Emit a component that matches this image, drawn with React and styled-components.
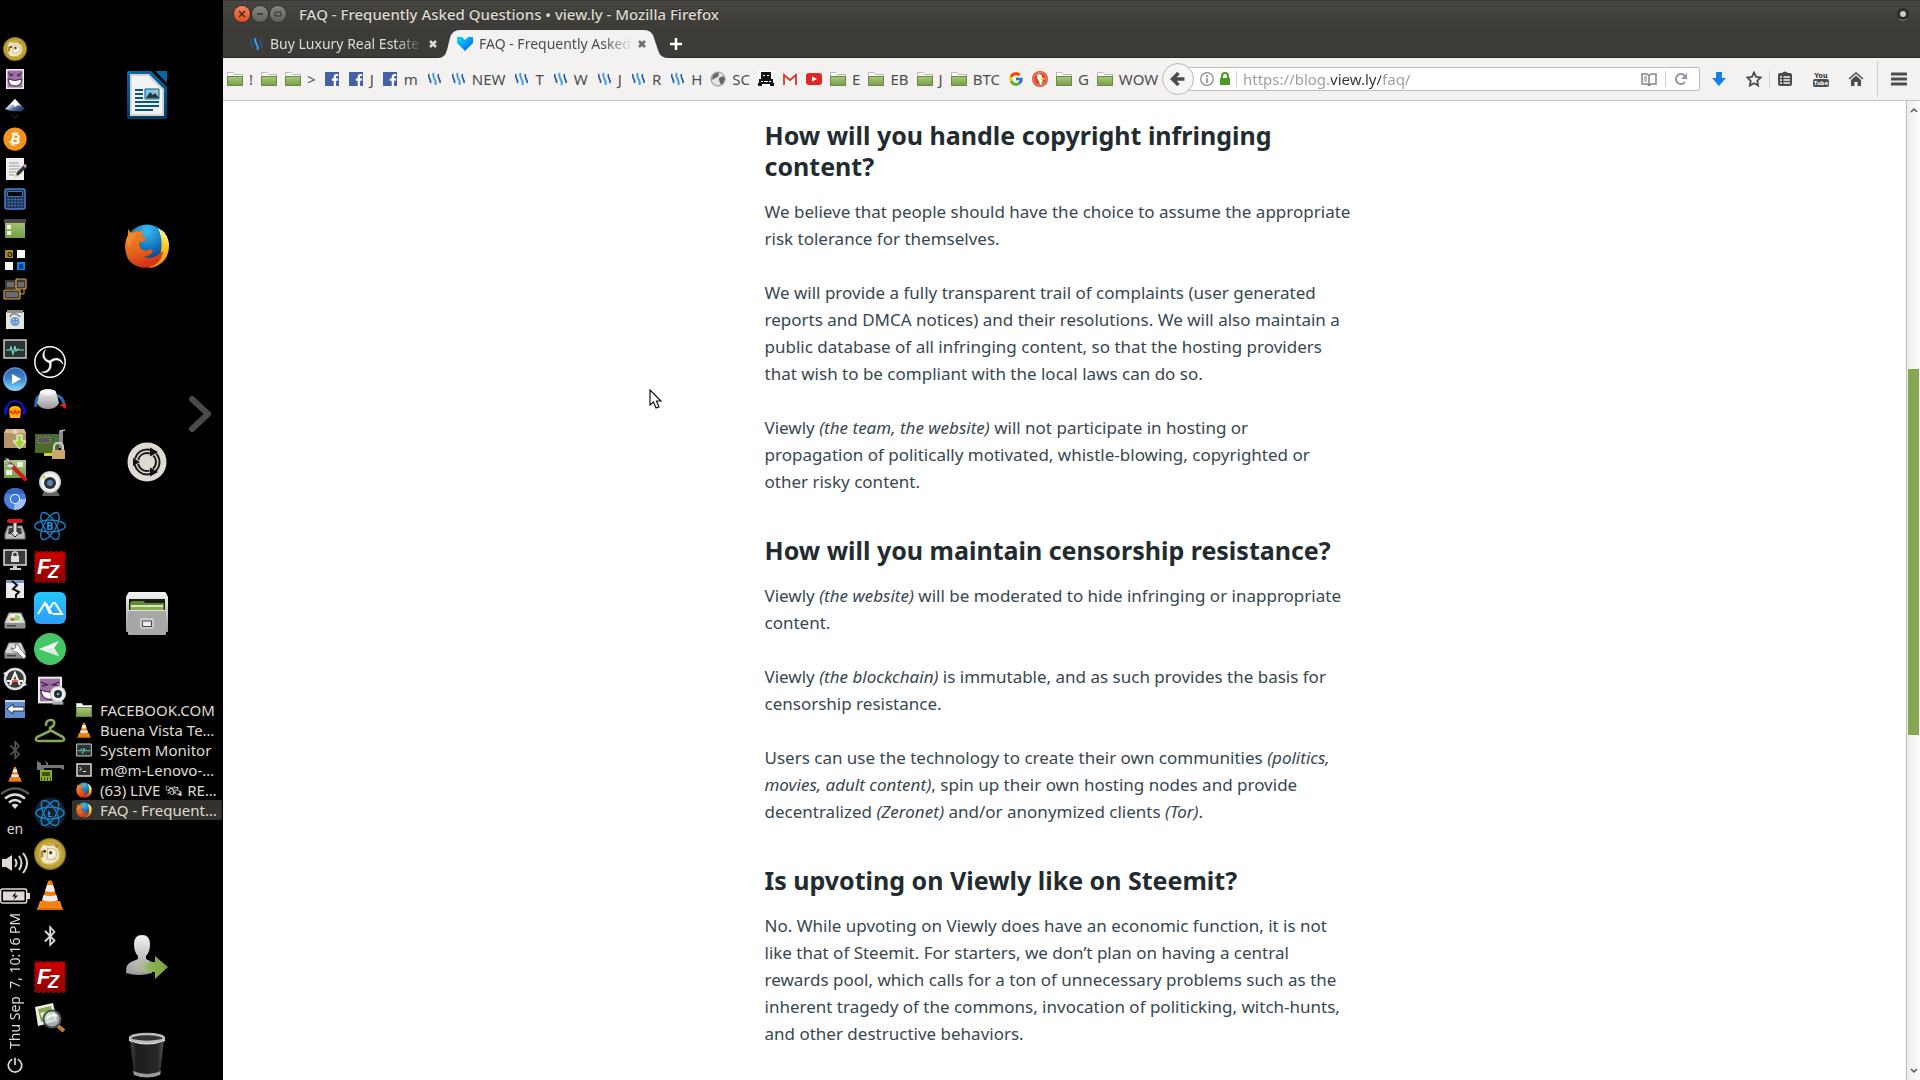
import React from 'react';
import styled, { createGlobalStyle, css } from 'styled-components';
import { FaBitcoin, FaBluetoothB, FaFacebookF } from 'react-icons/fa';
import { FcGoogle } from 'react-icons/fc';

const GlobalStyle = createGlobalStyle`
  * { box-sizing: border-box; }
  body {
    margin: 0;
    overflow: hidden;
    background: #000;
    font-family: 'Noto Sans', 'Open Sans', sans-serif;
  }
  button {
    padding: 0;
    border: none;
    background: none;
    color: inherit;
    font: inherit;
  }
  svg { display: block; flex: none; }
`;

const Desktop = styled.div`
  display: flex;
  height: 100vh;
  overflow: hidden;
`;

/* ---------- left panels ---------- */

const IndicatorColumn = styled.nav`
  display: flex;
  flex-direction: column;
  align-items: center;
  flex: none;
  width: 30px;
  padding-top: 34px;
  color: #dfdbd2;
  font-size: 14px;
`;

const LauncherColumn = styled.nav`
  display: flex;
  flex-direction: column;
  align-items: center;
  gap: 9px;
  flex: none;
  width: 40px;
  padding-top: 346px;
  color: #dfdbd2;
`;

const DesktopColumn = styled.nav`
  display: flex;
  flex-direction: column;
  align-items: center;
  flex: none;
  width: 153px;
  padding-top: 71px;
`;

const IndicatorButton = styled.button`
  display: flex;
  align-items: center;
  justify-content: center;
  flex: none;
  width: 30px;
  height: 30px;
`;

const TrayButton = styled(IndicatorButton)`
  height: 24px;
  margin-top: ${(props) => props.$gap || 0}px;
`;

const Clock = styled.button`
  writing-mode: vertical-rl;
  transform: rotate(180deg);
  height: 138px;
  margin-top: 4px;
  white-space: pre;
  line-height: 20px;
`;

const LauncherButton = styled.button`
  display: flex;
  align-items: center;
  justify-content: center;
  flex: none;
  width: 32px;
  height: 32px;
`;

const DesktopButton = styled.button`
  flex: none;
  margin-top: ${(props) => props.$gap || 0}px;
`;

const Chevron = styled(DesktopButton)`
  align-self: flex-end;
  margin-right: 11px;
`;

const TaskList = styled.div`
  align-self: stretch;
  margin: 65px 1px 0 2px;
`;

const Task = styled.button`
  display: flex;
  align-items: center;
  gap: 8px;
  width: 100%;
  height: 20px;
  padding-left: 4px;
  border-radius: 2px;
  color: #dfdbd2;
  font-size: 15px;
  line-height: 20px;
  white-space: nowrap;
  background: ${(props) => props.$active ? '#33322f' : 'none'};
`;

/* ---------- browser window ---------- */

const Browser = styled.section`
  display: flex;
  flex-direction: column;
  flex: 1;
  min-width: 0;
  background: #fff;
`;

const Chrome = styled.header`
  background: linear-gradient(#474642, #3c3b37 28px);
  border-top: 1px solid #3a3935;
  border-bottom: 1px solid #2a2926;
`;

const TitleBar = styled.div`
  display: flex;
  align-items: center;
  height: 27px;
  padding: 0 10px 2px 11px;
  gap: 2px;
  color: #dfdbd2;
`;

const WindowTitle = styled.h1`
  flex: 1;
  margin: 0 0 0 11px;
  font-size: 15px;
  line-height: 20px;
  font-weight: 500;
  text-shadow: 0 -1px #222;
`;

const WindowButton = styled.button`
  display: flex;
  align-items: center;
  justify-content: center;
  width: 16px;
  height: 16px;
  border-radius: 50%;
  box-shadow: 0 0 0 1px #33322e;
  color: #3c3b37;
  background: ${(props) => props.$close
    ? 'linear-gradient(#f48562, #df4d1f)'
    : 'linear-gradient(#85847d, #62615b)'};
`;

const TabStrip = styled.div`
  display: flex;
  height: 29px;
  padding: 3px 0 0 15px;
`;

const Tab = styled.div`
  position: relative;
  display: flex;
  align-items: center;
  width: 209px;
  padding: 0 5px 0 10px;
  color: ${(props) => props.$active ? '#4c4c4c' : '#dfdbd2'};
`;

const TabShape = styled.svg`
  position: absolute;
  left: -9px;
  bottom: -1px;
`;

const TabLabel = styled.button`
  position: relative;
  display: flex;
  align-items: center;
  gap: 6px;
  flex: 1;
  min-width: 0;
  overflow: hidden;
  font-size: 14px;
  line-height: 20px;
  white-space: nowrap;
  mask-image: linear-gradient(to right, #000 84%, transparent);
`;

const TabClose = styled.button`
  position: relative;
  padding: 4px;
`;

const NewTab = styled.button`
  margin-left: 13px;
`;

const ToolBar = styled.div`
  display: flex;
  align-items: center;
  height: 43px;
  flex: none;
  background: #f4f2f1;
  border-bottom: 1px solid #c6c3c0;
`;

const Bookmarks = styled.nav`
  display: flex;
  align-items: center;
  flex: none;
  width: 939px;
  overflow: hidden;
`;

const Bookmark = styled.a`
  display: flex;
  align-items: center;
  gap: 6px;
  flex: none;
  height: 24px;
  padding: 0 4px;
  color: #4c4c4c;
  font-size: 15px;
  text-decoration: none;
`;

const BackButton = styled.button`
  display: flex;
  align-items: center;
  justify-content: center;
  flex: none;
  width: 32px;
  height: 32px;
  border: 1px solid #bbb9b6;
  border-radius: 50%;
  background: #f7f6f5;
  z-index: 1;
`;

const AddressBar = styled.div`
  display: flex;
  align-items: center;
  flex: 1;
  height: 24px;
  margin-left: -6px;
  padding: 0 11px;
  border: 1px solid #bfbcb9;
  border-radius: 2px;
  background: #fff;
`;

/* the host part of the address is darker than the rest */
const AddressInput = styled.input`
  flex: 1;
  min-width: 0;
  height: 22px;
  padding: 0;
  border: none;
  outline: none;
  font: 15px/22px 'Noto Sans', sans-serif;
  background: linear-gradient(to right, #9b9b9b 88px, #333 88px, #333 138px, #9b9b9b 138px);
  background-clip: text;
  -webkit-text-fill-color: transparent;
`;

const LockMark = styled.span`
  margin-left: 6px;
`;

const Divider = styled.span`
  flex: none;
  width: 1px;
  height: ${(props) => props.$tall ? 36 : 16}px;
  margin: 0 ${(props) => props.$space || 6}px;
  background: #d0cecb;
`;

const Tools = styled.div`
  display: flex;
  align-items: center;
  flex: none;
  padding: 0 13px 0 12px;
`;

const ToolButton = styled.button`
  margin-right: ${(props) => props.$gap || 0}px;
`;

const Viewport = styled.div`
  display: flex;
  flex: 1;
  min-height: 0;
`;

const Article = styled.main`
  flex: 1;
  overflow: hidden;
  padding-top: 19px;
`;

const Column = styled.div`
  width: 600px;
  margin: 0 auto;
  white-space: nowrap;
`;

const Heading = styled.h2`
  margin: 0 0 16px;
  color: #222c30;
  font-size: 25px;
  line-height: 31px;
  font-weight: 700;
`;

const Paragraph = styled.p`
  margin: 0 0 27px;
  color: #37474f;
  font-size: 17px;
  line-height: 27px;
  ${(props) => props.$last && css`margin-bottom: 40px;`}
`;

const Scrollbar = styled.div`
  display: flex;
  flex-direction: column;
  width: 14px;
  border-left: 1px solid #bfbcb9;
  background: linear-gradient(to right, #efedeb, #fcfcfb);
`;

const ScrollButton = styled.button`
  display: flex;
  align-items: center;
  justify-content: center;
  height: 18px;
`;

const Track = styled.div`
  display: grid;
  flex: 1;
  grid-template-rows: 250fr 366fr 327fr;
`;

const Thumb = styled.div`
  grid-row: 2;
  margin: 0 1px;
  background: #86a651;
`;

const Pointer = styled.svg`
  position: absolute;
  left: 649px;
  top: 389px;
`;

const SharedDefs = styled.svg`
  position: absolute;
`;

/* ---------- drawings ---------- */

const Defs = () => (
  <SharedDefs width='0' height='0' aria-hidden='true'>
    <defs>
      <linearGradient id='silver' x2='0' y2='1'><stop stopColor='#f4f4f4' /><stop offset='1' stopColor='#999' /></linearGradient>
      <linearGradient id='green' x2='0' y2='1'><stop stopColor='#a9c87c' /><stop offset='1' stopColor='#779e43' /></linearGradient>
      <linearGradient id='red' x2='0' y2='1'><stop stopColor='#d00000' /><stop offset='1' stopColor='#8c0000' /></linearGradient>
      <linearGradient id='blue' x2='0' y2='1'><stop stopColor='#2c5ba8' /><stop offset='.5' stopColor='#3f86d0' /><stop offset='1' stopColor='#8be0ff' /></linearGradient>
      <linearGradient id='writer' x2='0' y2='1'><stop stopColor='#0369a3' /><stop offset='1' stopColor='#023f62' /></linearGradient>
      <linearGradient id='sky' x2='0' y2='1'><stop stopColor='#23c8ff' /><stop offset='1' stopColor='#2e9dfa' /></linearGradient>
      <linearGradient id='peak' x2='1' y2='1'><stop offset='.3' stopColor='#fff' /><stop offset='.6' stopColor='#4a6ea4' /><stop offset='1' stopColor='#0b1d3c' /></linearGradient>
      <linearGradient id='heart' x2='1' y2='1'><stop stopColor='#00e0f8' /><stop offset='1' stopColor='#0058e8' /></linearGradient>
      <linearGradient id='fade' x2='1' y2='0'><stop stopColor='#d0dcc0' stopOpacity='0' /><stop offset='.5' stopColor='#8db35a' /><stop offset='1' stopColor='#7ba03c' /></linearGradient>
      <linearGradient id='bin' x2='1' y2='0'><stop stopColor='#444' /><stop offset='.2' stopColor='#1d1d1e' /><stop offset='.8' stopColor='#262627' /><stop offset='1' stopColor='#555' /></linearGradient>
      <linearGradient id='fox' x2='0.3' y2='1'><stop stopColor='#f08a28' /><stop offset='.6' stopColor='#e8661b' /><stop offset='1' stopColor='#d4321a' /></linearGradient>
      <linearGradient id='flame' x2='0' y2='1'><stop stopColor='#fff3a0' /><stop offset='.4' stopColor='#ffd31c' /><stop offset='1' stopColor='#ee7a1c' /></linearGradient>
      <radialGradient id='globe' cx='.5' cy='.15' r='.9'><stop stopColor='#38bdf0' /><stop offset='.45' stopColor='#1374bd' /><stop offset='1' stopColor='#11194c' /></radialGradient>
      <radialGradient id='ball'><stop stopColor='#fff' /><stop offset='.8' stopColor='#eee' /><stop offset='1' stopColor='#bbb' /></radialGradient>
    </defs>
  </SharedDefs>
);

const Icon = ({ size = 24, height, box = 24, children }) => (
  <svg width={size} height={height || size} viewBox={typeof box === 'string' ? box : `0 0 ${box} ${box}`} aria-hidden='true'>
    {children}
  </svg>
);

const Doge = ({ size }) => (
  <Icon size={size}>
    <circle cx='12' cy='12' r='12' fill='#8d7823' />
    <circle cx='12' cy='12' r='11' fill='#bba136' />
    <circle cx='12' cy='12' r='8.5' fill='#c9b34c' />
    <path d='M5 8l2-3 3 1h4l3-2 1 5q2 5-1 8-3 3-9 2-4-2-3-11z' fill='#f0e7cb' />
    <path d='M16 4l2 1v3l-3-2zM5 10l2-1v5l-2 1z' fill='#b48a3a' />
    <path d='M10 8h3q4 0 4 4t-4 4h-3z' fill='#f7f0dd' stroke='#cfc08f' />
    <circle cx='8' cy='10' r='1' fill='#33270d' /><circle cx='12.500' cy='11' r='1.200' fill='#4b3b18' />
  </Icon>
);

const Grin = ({ size, cam }) => (
  <Icon size={size}>
    <path d='M3 2h18v20H3z' fill='#eee' />
    <path d='M4.500 3.500h15v17h-15z' fill='#9d6fa3' />
    <path d='M5 6l5 2-4 1m13-3l-5 2 4 1' stroke='#43214c' fill='none' />
    <path d='M5 12q7 3 14 0-1 7-7 7t-7-7z' fill='#fff' stroke='#482750' />
    {cam && <g><circle cx='18' cy='15' r='6' fill='url(#ball)' /><path d='M14 21h8v2h-8z' fill='#aaa' /><circle cx='18' cy='15' r='3' fill='#222d38' /><circle cx='18' cy='15' r='1' fill='#8aa6bd' /></g>}
  </Icon>
);

const Inkscape = () => (
  <Icon>
    <path d='M12 2l10 10q-4 4-8 2-6 1-12-2z' fill='url(#peak)' />
    <path d='M12 2l-5 6 3-1 2 3 3-2 3 1z' fill='#fff' />
    <path d='M9 18l3 3 4-3' fill='none' stroke='#333' />
  </Icon>
);

const Notes = () => (
  <Icon>
    <path d='M3 1h18v22H3z' fill='#efefed' />
    <path d='M6 6h10M6 9h11M6 12h10M6 15h7M6 18h5' stroke='#999' />
    <path d='M12 20l2-5 7-7 2 3-7 7z' fill='#3a3a3a' />
    <path d='M20 8l2-1 2 2-2 2z' fill='#d59cc8' /><path d='M11 21l2-4 2 2z' fill='#e0d46c' />
  </Icon>
);

const Calculator = () => (
  <Icon>
    <rect x='2' y='2' width='20' height='20' rx='2' fill='#1d3558' stroke='#4b7fc7' strokeWidth='1.500' />
    <path d='M4.500 4.500h15v5h-15z' fill='#05070c' stroke='#3e71b6' />
    <path d='M4.500 12.500h15M4.500 15.500h15M4.500 18.500h15' stroke='#4977b5' strokeWidth='1.500' strokeDasharray='2 1.300' />
  </Icon>
);

const GreenWindow = () => (
  <Icon><path d='M2 3h20v18H2z' fill='url(#green)' /><path d='M1 2h22v4H1z' fill='#4b4a46' /><path d='M4 8h4v4H4zM4 14h4v4H4z' fill='#f2f2ea' /></Icon>
);

const Quad = () => (
  <Icon>
    <path d='M2 3h8v8H2z' fill='#b08a0a' /><path d='M14 3h8v8h-8zM2 15h8v8H2z' fill='#fff' />
    <path d='M14 15h8v8h-8z' fill='#0c83f2' />
    <text x='4' y='10' fontSize='7' fontWeight='700' fill='#1b1400'>O</text>
    <text x='16' y='22' fontSize='7' fontWeight='700' fill='#04264c'>B</text>
  </Icon>
);

const Screens = () => (
  <Icon>
    <rect x='2' y='3' width='11' height='9' fill='#3a3a3a' /><rect x='13' y='2' width='10' height='10' rx='1' fill='#3a3a3a' stroke='#e0a63a' strokeWidth='1.200' />
    <rect x='1' y='13' width='16' height='9' rx='1' fill='#3a3a3a' stroke='#e0a63a' strokeWidth='1.200' />
    <path d='M4 5h7v5H4zM15 5h6v5h-6zM3 15h12v5H3z' fill='#6d6d6d' /><path d='M17 17h4v-5' fill='none' stroke='#e0a63a' />
  </Icon>
);

const Phone = () => (
  <Icon>
    <path d='M3 5h18v17H3z' fill='#e4e4e0' /><path d='M4 3h16v3H4z' fill='#8f8f8b' />
    <path d='M7 10q1-4 5-3t5 3' fill='none' stroke='#888' strokeWidth='1.500' />
    <circle cx='12' cy='14.500' r='4.500' fill='#6f98ce' /><path d='M10 12h1v1h-1zM13 12h1v1h-1zM10 15h1v1h-1zM13 15h1v1h-1z' fill='#fff' />
  </Icon>
);

const Monitor = ({ size = 24 }) => (
  <Icon size={size}>
    <path d='M1 3h22v18H1z' fill='#2c3433' stroke='#c9c9c9' strokeWidth='1.500' />
    <path d='M3 13h4l1-3 2 7 2-8 1 5 2-2 1 1h5' fill='none' stroke='#6fe0c6' strokeWidth='1.200' />
  </Icon>
);

const Player = () => (
  <Icon><circle cx='12' cy='12' r='12' fill='url(#blue)' /><circle cx='12' cy='12' r='11' fill='none' stroke='#9cc0e4' strokeOpacity='.6' /><path d='M9 7l9 5-9 5z' fill='#fff' /></Icon>
);

const Headphones = () => (
  <Icon>
    <path d='M4 13q0-9 8-9t8 9' fill='none' stroke='#1616b0' strokeWidth='2' />
    <path d='M1 12q0-3 3-3v9q-3 0-3-3zM23 12q0-3-3-3v9q3 0 3-3z' fill='#0d10c8' />
    <path d='M6 14q0-5 6-5t6 5l-1 7H7z' fill='#ffb50b' /><path d='M6 14l2-1 2 2 2-3 2 3 2-2 2 1v3l-2-1-2 2-2-2-2 2-2-2-2 1z' fill='#ff4500' />
  </Icon>
);

const Parcel = () => (
  <Icon>
    <path d='M1 6l2-4h18l2 4v15H1z' fill='#b6946b' /><path d='M1 6l2-4h18l2 4z' fill='#d6b891' /><path d='M10 2h4v5h-4z' fill='#e6d2b4' />
    <path d='M14 8h5v6h4l-6.500 8-6.500-8h4z' fill='#a4d13b' stroke='#fff' />
  </Icon>
);

const Tweak = () => (
  <Icon>
    <path d='M1 3h22v18H1z' fill='url(#green)' /><path d='M3 13h6v5H3zM14 5h6v5h-6z' fill='#eee' />
    <path d='M7 7l15 15' stroke='#c8201c' strokeWidth='4' strokeLinecap='round' />
    <path d='M2 1l4 1 1 5 4 1-2 3q-5 0-7-4l3 1 1-2z' fill='#ddd' stroke='#666' strokeWidth='.5' />
  </Icon>
);

const Chromium = () => (
  <Icon>
    <circle cx='12' cy='12' r='11' fill='#4a80e2' />
    <path d='M12 12h11a11 11 0 0 1-12 11z' fill='#9fc0fa' /><path d='M2 7q3-6 10-6 8 0 10 6H12z' fill='#3668c8' />
    <circle cx='12' cy='12' r='5' fill='#fff' /><circle cx='12' cy='12' r='4' fill='#3d78dd' />
  </Icon>
);

const Transmission = () => (
  <Icon>
    <path d='M5 9h14l3 8v5H2v-5z' fill='#bbb' stroke='#777' /><path d='M6 11h12l1 6H5z' fill='#444' />
    <path d='M10 4h4v11h3l-5 5-5-5h3z' fill='#ddd' stroke='#222' /><rect x='4' y='2' width='16' height='4' rx='2' fill='#cf1d1d' />
  </Icon>
);

const LockScreen = () => (
  <Icon>
    <path d='M1 3h22v15H1z' fill='#393939' stroke='#ddd' strokeWidth='1.500' /><path d='M10 19h4v2h4v2H7v-2h3z' fill='#ccc' />
    <path d='M8 9h8v6H8z' fill='#ddd' /><path d='M9.500 9V7q0-2 2.500-2t2.500 2v2' fill='none' stroke='#ddd' strokeWidth='1.500' />
  </Icon>
);

const TornPage = () => (
  <Icon><path d='M3 4h18v17H3z' fill='#e9ebee' /><path d='M3 3h18v3H3z' fill='#6f94c6' /><path d='M9 4l5 4-4 4 6 3-3 3v4' fill='none' stroke='#111' strokeWidth='2' /></Icon>
);

const Disk = ({ wrench }) => (
  <Icon>
    <path d='M6 6h12l4 9v6H2v-6z' fill='#d6d6d6' stroke='#999' /><path d='M2 16h20v5H2z' fill='#8f8f8f' /><path d='M4 18h9v1.500H4z' fill='#444' />
    {wrench
      ? <path d='M21 22l-7-7-3 0-3-4 3 1 2-2-1-3q4 0 5 4l6 8z' fill='#fff' stroke='#777' />
      : <g><ellipse cx='12' cy='11' rx='6' ry='3.500' fill='#9ccf6c' stroke='#fff' /><path d='M12 11L6.500 10q2-2.500 5.500-2.500z' fill='#eee' /><path d='M12 11l-5.500 1.500 3.500 1.500z' fill='#e03c2c' /></g>}
  </Icon>
);

const Updater = () => (
  <Icon>
    <circle cx='12' cy='12' r='10' fill='#3b3b3b' stroke='#ddd' strokeWidth='2.500' />
    <path d='M7 18l5-12 5 12M8.500 13.500h7' fill='none' stroke='#fff' strokeWidth='2' /><path d='M4 13h16v2H4z' fill='#fff' /><path d='M9 13h6v2H9z' fill='#f0643c' />
    <path d='M0 6l6-2-2 6zM24 18l-6 2 2-6z' fill='#eee' />
  </Icon>
);

const BackBox = () => (
  <Icon><path d='M2 3h20v18H2z' fill='#5b8fd0' /><path d='M2 3h20v2H2z' fill='#c7d6ea' /><path d='M4 12l6-5v3h11v4H10v3z' fill='#fff' stroke='#333' /></Icon>
);

const Cone = ({ size }) => (
  <Icon size={size} box={32}>
    <path d='M6 22h20l3 9H3z' fill='#f38a17' /><path d='M3 29h26v2H3z' fill='#d66a05' />
    <path d='M14 2q2-1.500 4 0l7 24q-9 4-18 0z' fill='#f57f0a' />
    <path d='M13 6h6l2 6q-5 2-10 0zM9.500 16q6.500 2 13 0l1.500 5q-8 3-16 0z' fill='#e9edef' />
  </Icon>
);

const Wifi = () => (
  <Icon size={30} height={22} box='0 0 30 22'>
    <path d='M1 7q14-11 28 0' fill='none' stroke='#555' strokeWidth='2.500' />
    <path d='M5 11.500q10-8 20 0M9 15.500q6-5 12 0' fill='none' stroke='#dfdbd2' strokeWidth='2.500' />
    <path d='M11.500 18q3.500-2.500 7 0L15 22z' fill='#dfdbd2' />
  </Icon>
);

const Volume = () => (
  <Icon size={28} height={24} box='0 0 28 24'>
    <path d='M1 8h4l6-4v16l-6-4H1z' fill='#dfdbd2' />
    <path d='M14 8q3 4 0 8M18 5q5 7 0 14M22 2q8 10 0 20' fill='none' stroke='#dfdbd2' strokeWidth='2' />
  </Icon>
);

const Battery = () => (
  <Icon size={30} height={16} box='0 0 30 16'>
    <rect x='.7' y='1' width='26' height='14' rx='1.500' fill='none' stroke='#dfdbd2' strokeWidth='1.400' />
    <path d='M3 3.500h21.500v9H3zM27 5h3v6h-3z' fill='#dfdbd2' /><path d='M16 4l-4 4.500h3l-1.500 3.500 4.500-4.500h-3z' fill='#000' />
  </Icon>
);

const Power = () => (
  <Icon size={16}><path d='M8 3.500a10 10 0 1 0 8 0M12 1v11' fill='none' stroke='#dfdbd2' strokeWidth='2.500' /></Icon>
);

const Obs = () => (
  <Icon size={32} box={32}>
    <circle cx='16' cy='16' r='15.200' fill='#000' stroke='#fff' strokeWidth='1.500' />
    {[0, 120, 240].map((turn) => (
      <path key={turn} transform={`rotate(${turn} 16 16)`} d='M11.500 3.500C6.500 8 8.500 15 16 17 17 16 16.500 15 16 15 10 13.500 9 8.500 11.500 3.500z' fill='#fff' stroke='#fff' strokeWidth='.5' />
    ))}
  </Icon>
);

const Knob = () => (
  <Icon size={32} box={32}>
    <path d='M2 20Q1 10 7 8M22 8q7 2 8 9' fill='none' stroke='#2b67b0' strokeWidth='3' /><path d='M25 18l7-2v6z' fill='#e01818' />
    <path d='M6 5q7-4 16 0l3 11q-3 6-11 6T3 16z' fill='url(#silver)' /><ellipse cx='14' cy='5' rx='8' ry='3' fill='#f6f6f6' />
  </Icon>
);

const Circuit = () => (
  <Icon size={32} box={32}>
    <path d='M1 6h24v19H1z' fill='#4b6a25' /><path d='M4 9h12v6H4z' fill='#555' stroke='#999' strokeDasharray='1 1' /><path d='M10 25h10v3H10z' fill='#d8ca35' />
    <path d='M22 9v2M22 13v2' stroke='#3b71b5' strokeWidth='2' /><path d='M26 20V3l5-1M28 3v25' stroke='#bbb' strokeWidth='1.500' fill='none' />
    <path d='M20 22v-3q0-4 4.500-4t4.500 4v3' fill='none' stroke='#ccc' strokeWidth='2' /><path d='M18 22h13v9H18z' fill='#cda86c' />
  </Icon>
);

const Webcam = () => (
  <Icon size={32} box={32}>
    <path d='M10 22h13l3 5H8z' fill='#666' /><circle cx='16' cy='13' r='11' fill='url(#ball)' /><circle cx='16' cy='14' r='6' fill='#2c3136' />
    <circle cx='16' cy='14' r='3' fill='#5f83a5' /><circle cx='10' cy='8' r='1.500' fill='#c9d632' />
  </Icon>
);

const Atom = ({ children, dark }) => (
  <Icon size={32} box={32}>
    {dark && <circle cx='16' cy='16' r='15.500' fill='#171f2b' />}
    <g fill='none' stroke='#1b81c4' strokeWidth='1.400'>
      <ellipse cx='16' cy='16' rx={dark ? 14 : 15.200} ry='6' />
      <ellipse cx='16' cy='16' rx={dark ? 14 : 15.200} ry='6' transform='rotate(60 16 16)' />
      <ellipse cx='16' cy='16' rx={dark ? 14 : 15.200} ry='6' transform='rotate(120 16 16)' />
    </g>
    <text x='16' y='20' textAnchor='middle' fontSize={dark ? 9 : 11} fontWeight='700' fill='#2492dc'>{children}</text>
  </Icon>
);

const FileZilla = () => (
  <Icon size={32} box={32}>
    <path d='M1 1h30v30H1z' fill='url(#red)' stroke='#8c0000' strokeWidth='2' strokeDasharray='3 2' />
    <text x='3' y='23' fontSize='22' fontWeight='700' fontStyle='italic' fontFamily='Liberation Sans, sans-serif' fill='#fff'>
      F<tspan x='14' y='27' fontSize='18'>Z</tspan>
    </text>
  </Icon>
);

const Peaks = () => (
  <Icon size={32} box={32}><rect width='32' height='32' rx='6' fill='url(#sky)' /><path d='M4 22l7-11 6 10M16 16l3-5h2l7 11h-9' fill='none' stroke='#fff' strokeWidth='2' /><path d='M10 11h3l6 11h-4z' fill='#fff' /></Icon>
);

const Plane = () => (
  <Icon size={32} box={32}><circle cx='16' cy='16' r='16' fill='#46c765' /><path d='M5 16l20-8-5 7 5 8z' fill='#fff' /><path d='M5 16l15-1 5 8z' fill='#dceee0' /></Icon>
);

const Hanger = () => (
  <Icon size={32} box={32}><path d='M12 10q0-5 4.500-5T20 9q0 2-4 4v3L3 22q-3 4 2 4h22q5 0 2-4l-13-7' fill='none' stroke='#86a75a' strokeWidth='2.600' strokeLinecap='round' /></Icon>
);

const Caliper = () => (
  <Icon size={32} box={32}>
    <path d='M3 5l4 2v5h3v8l-4-6H3zM11 5l3 2v3h13l3 2v2l-4-2H14z' fill='#77747a' /><path d='M5 9h25v3H5z' fill='#77747a' />
    <path d='M6 14h12v11H6z' fill='#8cab18' /><path d='M8 16h8v4H8z' fill='#3b5613' /><path d='M7 23h10' stroke='#333' strokeDasharray='1 2' strokeWidth='3' />
  </Icon>
);

const Viewer = () => (
  <Icon size={32} box={32}>
    <path d='M1 5l18-4 4 18-19 5z' fill='#eee' /><path d='M4 7l13-3 3 13-13 3z' fill='#8aa84b' /><path d='M6 11l9-2 2 6-8 2z' fill='#f3eccb' />
    <path d='M24 24l6 5' stroke='#c4812a' strokeWidth='4' /><circle cx='18' cy='17' r='8.500' fill='#cfdbd6' fillOpacity='.8' stroke='#49545c' strokeWidth='2' />
    <path d='M13 17q4-6 10-3' fill='none' stroke='#fff' strokeWidth='2' />
  </Icon>
);

const Writer = () => (
  <Icon size={40} height={48} box='0 0 40 48'>
    <path d='M2 0h22l16 16v30q0 2-2 2H2q-2 0-2-2V2q0-2 2-2z' fill='url(#writer)' /><path d='M28 0h12v12z' fill='#0369a3' />
    <path d='M3 3h19l15 15v27H3z' fill='#d4d4d4' /><path d='M5 5h16l14 14v24H5z' fill='#f3f3f3' />
    <path d='M8 19h8M8 23h8M8 27h8M8 31h24M8 35h24M8 39h18' stroke='#03558a' strokeWidth='2' />
    <path d='M18 18h14v10H18z' fill='#7fc6ef' stroke='#03558a' /><path d='M19 27l4-6 3 3 2-2 4 5z' fill='#333' /><circle cx='30' cy='20' r='1.500' fill='#ecc94b' />
  </Icon>
);

const Firefox = ({ size }) => (
  <Icon size={size} box={46}>
    <circle cx='23' cy='23' r='21.500' fill='url(#globe)' />
    <path d='M34 5q10 6 11 18 0 12-9 18-5 4-12 4 12-5 13-17 2-12-3-23z' fill='url(#flame)' />
    <path d='M37 6q8 7 8 17l-3-6-5-11z' fill='#fff0a0' />
    <path d='M4 6l3 4q5-3 9-1 2-2 3-2l-1 6 4 2-1 3-5 1q-2 2 0 5 2 5 9 3 3-2 4 1-4 7-10 5 8 6 20-5-1 12-13 16-14 3-22-8Q-2 22 4 12z' fill='url(#fox)' />
    <path d='M4 12q3-3 8 0l-4 6-3 6q-4-5-1-12z' fill='#f08b2d' />
  </Icon>
);

const Ubuntu = () => (
  <Icon size={40} box={40}>
    <circle cx='20' cy='20' r='19.500' fill='#dfdbd2' />
    <circle cx='20' cy='20' r='12.500' fill='none' stroke='#1c1c1c' strokeWidth='2' strokeDasharray='20 6.180' strokeDashoffset='10' />
    <circle cx='20' cy='20' r='9' fill='none' stroke='#1c1c1c' strokeWidth='2' strokeDasharray='15 3.850' strokeDashoffset='7.500' />
    <path d='M6 16l7 4-7 4zM23 5.500l8 4.500-8 4.500zM23 25.500l8 4.500-8 4.500z' fill='#111' />
  </Icon>
);

const Cabinet = () => (
  <Icon size={42} height={43} box='0 0 42 43'>
    <path d='M2 1q0-1 2-1h34q2 0 2 1l2 4v35H0V5z' fill='url(#silver)' /><path d='M3 7h36v12H3z' fill='#1c1d1b' />
    <path d='M4 11l2-2h12l1 2h19v9H4z' fill='#618a2e' /><path d='M5 13h32v2H5z' fill='#d8e8bd' /><path d='M5 15h32v4H5z' fill='#89ab58' />
    <path d='M2 18h38v24q0 1-1 1H3q-1 0-1-1z' fill='#a7a7a7' /><path d='M2 18h38v1H2z' fill='#ddd' />
    <rect x='14' y='26' width='14' height='11' rx='2' fill='#c9c9c9' /><path d='M16.500 29h9v5.500h-9z' fill='#eee' stroke='#444' />
  </Icon>
);

const SwitchUser = () => (
  <Icon size={42} height={46} box='0 0 42 46'>
    <path d='M0 38q0-8 5-10l7-3v-3Q8 18 8 10 8 1 16 1t8 9q0 8-4 12v3l6 3v11q-13 4-26 0z' fill='url(#silver)' />
    <path d='M6 28h23v-6l13 11-13 12v-7H6z' fill='url(#fade)' />
  </Icon>
);

const Trash = () => (
  <Icon size={38} height={46} box='0 0 38 46'>
    <path d='M2 8h34l-4 34q-13 6-26 0z' fill='url(#bin)' /><path d='M5 39q14 6 28 0l-1 4q-13 5-26 0z' fill='#999' />
    <path d='M1 6q18 10 36 0v3q-18 7-36 0z' fill='#ddd' /><ellipse cx='19' cy='6' rx='17' ry='4' fill='#333' stroke='#bbb' strokeWidth='2.500' />
  </Icon>
);

const Folder = () => (
  <Icon size={16} box={16}>
    <path d='M0 1h6l1 2h9v12H0z' fill='#b9bab5' /><path d='M1 2h5l1 2h8v3H1z' fill='#fff' />
    <path d='M.5 5.500h15v9H.5z' fill='url(#green)' stroke='#6b8747' />
  </Icon>
);

const Terminal = () => (
  <Icon size={16} box={16}><path d='M1 2h14v12H1z' fill='#2e2e2e' stroke='#ddd' strokeWidth='1.500' /><path d='M3.500 5l2 2-2 2M7 9.500h3' stroke='#eee' fill='none' /></Icon>
);

const Steem = () => (
  <Icon size={16} box={16}>
    <path d='M3 3q-1 2 .5 4.500T4.500 12' fill='none' stroke='#1f569f' strokeWidth='1.600' />
    <path d='M7.500 2q-1 3 1 6t1 6' fill='none' stroke='#3b9bf4' strokeWidth='2' />
    <path d='M12.500 3q-1 2 .5 4.500t1 4.500' fill='none' stroke='#1f569f' strokeWidth='1.600' />
  </Icon>
);

const Facebook = () => (
  <Icon size={16} box={16}><path d='M1 1h14v14H1z' fill='#4560a5' /><FaFacebookF x='5' y='3' size={12} color='#fff' /></Icon>
);

const Globe = () => (
  <Icon size={16} box={16}><circle cx='8' cy='8' r='7' fill='#e5e5e5' stroke='#8b8b8b' /><path d='M3 4q4-3 6-2l-1 4-3 1-2 2-1-2zM9 7l4-2 2 3-3 6-2-2-1-3z' fill='#666' /></Icon>
);

const Cab = () => (
  <Icon size={16} box={16}>
    <path d='M0 0h16v16H0z' fill='#fff' /><path d='M3 1h10v7H3zM1 8h14v5H1zM0 12h4v3H0zM12 12h4v3h-4z' fill='#111' />
    <path d='M5 4.500h2M9 4.500h2M3 10.500h2M11 10.500h2M6 10.500h4' stroke='#fff' />
  </Icon>
);

const Gmail = () => (
  <Icon size={16} box={16}><path d='M1 3h14v11H1z' fill='#f6f6f6' /><path d='M2 14V4l6 5 6-5v10' fill='none' stroke='#d8372b' strokeWidth='1.800' /></Icon>
);

const YouTube = () => (
  <Icon size={16} box={16}><rect y='2' width='16' height='12' rx='3' fill='#dd2626' /><path d='M6 5.500l5 2.500-5 2.500z' fill='#fff' /></Icon>
);

const Duck = () => (
  <Icon size={16} box={16}>
    <circle cx='8' cy='8' r='8' fill='#de4a28' /><circle cx='8' cy='8' r='6.500' fill='none' stroke='#fff' strokeOpacity='.5' strokeWidth='.8' />
    <path d='M5 4q2-2 4.500 0 1.500 3 .5 9l-2 1Q7 9 5 7z' fill='#fff' /><path d='M9 7h4v1.500H9z' fill='#fdd20a' /><path d='M9 11l3-1v3z' fill='#65bc46' />
  </Icon>
);

const Cross = ({ color }) => (
  <Icon size={10} box={10}><path d='M2 2l6 6m0-6L2 8' stroke={color} strokeWidth='2.500' /></Icon>
);

/* ---------- data ---------- */

const indicators = [
  ['Dogecoin', <Doge />], ['Memes', <Grin />], ['Inkscape', <Inkscape />],
  ['Bitcoin', <Icon><circle cx='12' cy='12' r='11' fill='#fff' /><FaBitcoin size={24} color='#f7931a' /></Icon>],
  ['Text Editor', <Notes />], ['Calculator', <Calculator />], ['Window', <GreenWindow />], ['OB', <Quad />],
  ['Displays', <Screens />], ['Phone', <Phone />], ['System Monitor', <Monitor />], ['Player', <Player />],
  ['Audacity', <Headphones />], ['Packages', <Parcel />], ['Tweak Tool', <Tweak />], ['Chromium', <Chromium />],
  ['Transmission', <Transmission />], ['Lock Screen', <LockScreen />], ['Document', <TornPage />],
  ['Disk Usage', <Disk />], ['Disks', <Disk wrench />], ['Software Updater', <Updater />], ['Remote', <BackBox />]
];

const launchers = [
  ['OBS', <Obs />], ['Mixer', <Knob />], ['Drivers', <Circuit />], ['Webcam', <Webcam />],
  ['Bitcoin Wallet', <Atom>B</Atom>], ['FileZilla', <FileZilla />], ['Mountain', <Peaks />], ['Send', <Plane />],
  ['Capture', <Grin size={32} cam />], ['Wardrobe', <Hanger />], ['Sensors', <Caliper />],
  ['Litecoin Wallet', <Atom dark>Ł</Atom>], ['Dogecoin Wallet', <Doge size={32} />], ['VLC', <Cone size={32} />],
  ['Bluetooth', <FaBluetoothB size={22} />], ['FileZilla transfer', <FileZilla />], ['Image Viewer', <Viewer />]
];

const tasks = [
  ['FACEBOOK.COM', <Folder />],
  ['Buena Vista Te…', <Cone size={16} />],
  ['System Monitor', <Monitor size={16} />],
  ['m@m-Lenovo-…', <Terminal />],
  ['(63) LIVE 🛰 RE…', <Firefox size={16} />],
  ['FAQ - Frequent…', <Firefox size={16} />]
];

const bookmarks = [
  [Folder, '!'], [Folder], [Folder, '>'], [Facebook], [Facebook, 'J'], [Facebook, 'm'],
  [Steem], [Steem, 'NEW'], [Steem, 'T'], [Steem, 'W'], [Steem, 'J'], [Steem, 'R'], [Steem, 'H'],
  [Globe, 'SC'], [Cab], [Gmail], [YouTube], [Folder, 'E'], [Folder, 'EB'], [Folder, 'J'],
  [Folder, 'BTC'], [FcGoogle], [Duck], [Folder, 'G'], [Folder, 'WOW']
];

/* ---------- sections ---------- */

const Indicators = () => (
  <IndicatorColumn>
    {indicators.map(([name, icon]) => <IndicatorButton key={name} aria-label={name}>{icon}</IndicatorButton>)}
    <TrayButton $gap={14} aria-label='Bluetooth off'><FaBluetoothB size={20} color='#555' /></TrayButton>
    <TrayButton aria-label='VLC'><Cone size={16} /></TrayButton>
    <TrayButton aria-label='Network'><Wifi /></TrayButton>
    <TrayButton $gap={6}>en</TrayButton>
    <TrayButton $gap={11} aria-label='Sound'><Volume /></TrayButton>
    <TrayButton $gap={9} aria-label='Battery'><Battery /></TrayButton>
    <Clock>{'Thu Sep  7, 10:16 PM'}</Clock>
    <TrayButton $gap={3} aria-label='Power'><Power /></TrayButton>
  </IndicatorColumn>
);

const DesktopIcons = () => (
  <DesktopColumn>
    <DesktopButton aria-label='LibreOffice Writer'><Writer /></DesktopButton>
    <DesktopButton $gap={104} aria-label='Firefox'><Firefox size={46} /></DesktopButton>
    <Chevron $gap={126} aria-label='Expand'>
      <Icon size={24} height={38} box='0 0 24 38'><path d='M4 4l16 15L4 34' fill='none' stroke='#4a4a4a' strokeWidth='6' strokeLinecap='round' strokeLinejoin='round' /></Icon>
    </Chevron>
    <DesktopButton $gap={9} aria-label='Ubuntu MATE'><Ubuntu /></DesktopButton>
    <DesktopButton $gap={110} aria-label='Files'><Cabinet /></DesktopButton>
    <TaskList>
      {tasks.map(([label, icon], i) => <Task key={label} $active={i === 5}>{icon}{label}</Task>)}
    </TaskList>
    <DesktopButton $gap={114} aria-label='Switch user'><SwitchUser /></DesktopButton>
    <DesktopButton $gap={52} aria-label='Trash'><Trash /></DesktopButton>
  </DesktopColumn>
);

const Address = () => (
  <AddressBar>
    <Icon size={14} box={14}><circle cx='7' cy='7' r='6.300' fill='none' stroke='#8a8a8a' strokeWidth='1.200' /><path d='M7 6v5M7 3v2' stroke='#8a8a8a' strokeWidth='1.600' /></Icon>
    <LockMark>
      <Icon size={10} height={14} box='0 0 10 14'><path d='M0 6h10v7H0z' fill='#4a9b22' /><path d='M2 7V4q0-3 3-3t3 3v3' fill='none' stroke='#4a9b22' strokeWidth='2' /></Icon>
    </LockMark>
    <Divider $space={6} />
    <AddressInput aria-label='Address' defaultValue='https://blog.view.ly/faq/' spellCheck={false} />
    <ToolButton aria-label='Reader view'>
      <Icon size={16} box={16}><path d='M1 3h5l2 1.500L10 3h5v10h-5l-2 1.500L6 13H1zM8 4v10' fill='none' stroke='#858585' strokeWidth='1.500' /><path d='M3 6h3M3 8h3M3 10h3' stroke='#858585' /></Icon>
    </ToolButton>
    <Divider $space={8} />
    <ToolButton aria-label='Reload'>
      <Icon size={14} box={14}><path d='M10.500 3.500A5 5 0 1 0 11 10' fill='none' stroke='#8d9aa5' strokeWidth='2' /><path d='M13 1v6H7z' fill='#8d9aa5' /></Icon>
    </ToolButton>
  </AddressBar>
);

const ToolIcons = () => (
  <Tools>
    <ToolButton $gap={20} aria-label='Downloads'>
      <Icon size={14} height={16} box='0 0 14 16'><path d='M4 1h6v6h4l-7 8-7-8h4z' fill='#1680ea' /></Icon>
    </ToolButton>
    <ToolButton aria-label='Bookmark this page'>
      <Icon size={16} box={16}><path d='M8 1.500l2 4.300 4.700.6-3.400 3.300.8 4.800L8 12.200l-4.100 2.300.8-4.800L1.300 6.400 6 5.800z' fill='none' stroke='#4c4c4c' strokeWidth='1.800' /></Icon>
    </ToolButton>
    <Divider $space={7} />
    <ToolButton $gap={20} aria-label='Bookmarks'>
      <Icon size={16} box={16}><path d='M5 2q3-3 6 0h2q2 0 2 2v9q0 2-2 2H3q-2 0-2-2V4q0-2 2-2z' fill='#4c4c4c' /><path d='M3 6h2M6.500 6H13M3 9h2M6.500 9H13M3 12h2M6.500 12H13' stroke='#f4f2f1' strokeWidth='1.500' /></Icon>
    </ToolButton>
    <ToolButton $gap={19} aria-label='YouTube'>
      <Icon size={16} box={16}>
        <text x='8' y='7' textAnchor='middle' fontSize='7' fontWeight='700' fill='#222'>You</text>
        <rect y='8' width='16' height='8' rx='2' fill='#4c4c4c' />
        <text x='8' y='14' textAnchor='middle' fontSize='6' fontWeight='700' fill='#fff'>Tube</text>
      </Icon>
    </ToolButton>
    <ToolButton aria-label='Home'>
      <Icon size={16} box={16}><path d='M1 8l7-6 7 6' fill='none' stroke='#4c4c4c' strokeWidth='1.500' /><path d='M3 9l5-4.500L13 9v6H9.500v-4h-3v4H3z' fill='#4c4c4c' /></Icon>
    </ToolButton>
    <Divider $tall $space={13} />
    <ToolButton aria-label='Menu'>
      <Icon size={16} box={16}><path d='M1 3h14M1 8h14M1 13h14' stroke='#4c4c4c' strokeWidth='3' strokeLinecap='round' /></Icon>
    </ToolButton>
  </Tools>
);

const FaqPage = () => (
  <Article>
    <Column>
      <Heading>How will you handle copyright infringing<br />content?</Heading>
      <Paragraph>We believe that people should have the choice to assume the appropriate<br />risk tolerance for themselves.</Paragraph>
      <Paragraph>We will provide a fully transparent trail of complaints (user generated<br />reports and DMCA notices) and their resolutions. We will also maintain a<br />public database of all infringing content, so that the hosting providers<br />that wish to be compliant with the local laws can do so.</Paragraph>
      <Paragraph $last>Viewly <em>(the team, the website)</em> will not participate in hosting or<br />propagation of politically motivated, whistle-blowing, copyrighted or<br />other risky content.</Paragraph>

      <Heading>How will you maintain censorship resistance?</Heading>
      <Paragraph>Viewly <em>(the website)</em> will be moderated to hide infringing or inappropriate<br />content.</Paragraph>
      <Paragraph>Viewly <em>(the blockchain)</em> is immutable, and as such provides the basis for<br />censorship resistance.</Paragraph>
      <Paragraph $last>Users can use the technology to create their own communities <em>(politics,<br />movies, adult content)</em>, spin up their own hosting nodes and provide<br />decentralized <em>(Zeronet)</em> and/or anonymized clients <em>(Tor)</em>.</Paragraph>

      <Heading>Is upvoting on Viewly like on Steemit?</Heading>
      <Paragraph>No. While upvoting on Viewly does have an economic function, it is not<br />like that of Steemit. For starters, we don’t plan on having a central<br />rewards pool, which calls for a ton of unnecessary problems such as the<br />inherent tragedy of the commons, invocation of politicking, witch-hunts,<br />and other destructive behaviors.</Paragraph>
    </Column>
  </Article>
);

class App extends React.Component {
  render () {
    return (
      <Desktop>
        <GlobalStyle />
        <Defs />
        <Indicators />
        <LauncherColumn>
          {launchers.map(([name, icon]) => <LauncherButton key={name} aria-label={name}>{icon}</LauncherButton>)}
        </LauncherColumn>
        <DesktopIcons />
        <Browser>
          <Chrome>
            <TitleBar>
              <WindowButton $close aria-label='Close'><Icon size={8} box={8}><path d='M1 1l6 6m0-6L1 7' stroke='#3c2a22' strokeWidth='1.500' /></Icon></WindowButton>
              <WindowButton aria-label='Minimize'><Icon size={8} box={8}><path d='M1 4h6' stroke='#33322e' strokeWidth='1.500' /></Icon></WindowButton>
              <WindowButton aria-label='Maximize'><Icon size={8} box={8}><path d='M1 2h6v4H1z' fill='none' stroke='#33322e' /></Icon></WindowButton>
              <WindowTitle>FAQ - Frequently Asked Questions • view.ly - Mozilla Firefox</WindowTitle>
              <Icon size={14} box={14}><circle cx='7' cy='7' r='6' fill='#2b2a27' /><circle cx='7' cy='7' r='3' fill='#cfcbc3' /><path d='M3 12q4 3 8 0' stroke='#777' fill='none' /></Icon>
            </TitleBar>
            <TabStrip>
              <Tab>
                <TabLabel><Steem />Buy Luxury Real Estate With</TabLabel>
                <TabClose aria-label='Close tab'><Cross color='#dfdbd2' /></TabClose>
              </Tab>
              <Tab $active>
                <TabShape width='230' height='28' viewBox='0 0 230 28' aria-hidden='true'>
                  <path d='M0 28q7 0 9-8l3-12q2-8 10-8h184q8 0 10 8l4 12q2 8 10 8z' fill='#f4f2f1' />
                </TabShape>
                <TabLabel>
                  <Icon size={16} box={16}><path d='M0 1h5l3 3 3-3h5v6l-8 8-8-8z' fill='url(#heart)' /></Icon>
                  FAQ - Frequently Asked Questions
                </TabLabel>
                <TabClose aria-label='Close tab'><Cross color='#6b6b6b' /></TabClose>
              </Tab>
              <NewTab aria-label='New tab'><Icon size={14} box={14}><path d='M7 1v12M1 7h12' stroke='#fff' strokeWidth='2.500' /></Icon></NewTab>
            </TabStrip>
          </Chrome>
          <ToolBar>
            <Bookmarks>
              {bookmarks.map(([Mark, label], i) => (
                <Bookmark key={i} href='#' aria-label={label || 'Bookmark'}><Mark size={16} />{label}</Bookmark>
              ))}
            </Bookmarks>
            <BackButton aria-label='Back'>
              <Icon size={16} box={16}><path d='M14.500 8H3M8.500 2L2.500 8l6 6' fill='none' stroke='#4c4c4c' strokeWidth='3.500' /></Icon>
            </BackButton>
            <Address />
            <ToolIcons />
          </ToolBar>
          <Viewport>
            <FaqPage />
            <Scrollbar>
              <ScrollButton aria-label='Scroll up'><Icon size={8} box={8}><path d='M1 6l3-3 3 3' fill='none' stroke='#555' strokeWidth='1.500' /></Icon></ScrollButton>
              <Track><Thumb /></Track>
              <ScrollButton aria-label='Scroll down'><Icon size={8} box={8}><path d='M1 2l3 3 3-3' fill='none' stroke='#555' strokeWidth='1.500' /></Icon></ScrollButton>
            </Scrollbar>
          </Viewport>
        </Browser>
        <Pointer width='14' height='22' viewBox='0 0 14 22' aria-hidden='true'>
          <path d='M1 1v15l3.500-3 2.500 6 3-1.200-2.500-5.800H12z' fill='#fff' stroke='#111' strokeWidth='1.200' />
        </Pointer>
      </Desktop>
    );
  }
}

export default App;
